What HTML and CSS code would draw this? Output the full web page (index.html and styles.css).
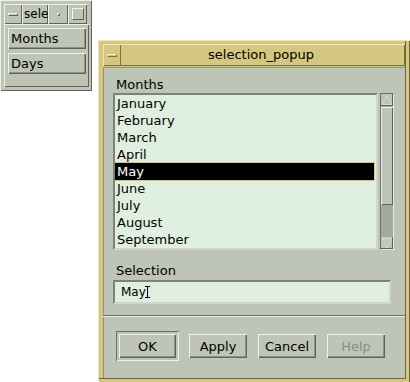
FILE: index.html
```html
<!DOCTYPE html>
<html lang="en">

<head>
    <meta charset="UTF-8">
    <title>selection_popup</title>
    <link rel="stylesheet" href="styles.css">
</head>

<body>
    <div class="desktop">
        <!-- main window, mostly covered -->
        <div class="small-win">
            <div class="titlebar small-title">
                <span class="tb-btn tb-menu"><i class="menu-bar"></i></span>
                <span class="tb-title">sele</span>
                <span class="tb-btn tb-min"><i class="min-dot"></i></span>
                <span class="tb-btn tb-max"><i class="max-box"></i></span>
            </div>
            <div class="small-body">
                <button class="push">Months</button>
                <button class="push">Days</button>
            </div>
        </div>

        <!-- popup dialog -->
        <div class="dialog">
            <div class="titlebar dlg-title">
                <span class="tb-btn tb-menu dlg-menu"><i class="menu-bar"></i></span>
                <span class="dlg-name">selection_popup</span>
            </div>
            <div class="client">
                <div class="label">Months</div>
                <div class="list-row">
                    <ul class="list">
                        <li>January</li>
                        <li>February</li>
                        <li>March</li>
                        <li>April</li>
                        <li class="selected">May</li>
                        <li>June</li>
                        <li>July</li>
                        <li>August</li>
                        <li>September</li>
                    </ul>
                    <div class="scrollbar">
                        <div class="arrow">
                            <svg width="12" height="12" viewBox="0 0 12 12"><path d="M6 1.5 L10.5 10.5 L1.5 10.5 Z" fill="none" stroke="#eef1e8" stroke-width="1" stroke-dasharray="1 1"/></svg>
                        </div>
                        <div class="trough">
                            <div class="thumb"></div>
                        </div>
                        <div class="arrow">
                            <svg width="12" height="12" viewBox="0 0 12 12"><path d="M6 10.5 L10.5 1.5 L1.5 1.5 Z" fill="none" stroke="#eef1e8" stroke-width="1" stroke-dasharray="1 1"/></svg>
                        </div>
                    </div>
                </div>
                <div class="label sel-label">Selection</div>
                <div class="field">May<span class="ibeam"></span></div>
                <div class="separator"></div>
                <div class="actions">
                    <div class="default-frame"><button class="push act">OK</button></div>
                    <button class="push act">Apply</button>
                    <button class="push act">Cancel</button>
                    <button class="push act disabled">Help</button>
                </div>
            </div>
        </div>
    </div>
</body>

</html>
```

FILE: styles.css
```css
body {
    margin: 0;
    background-color: #fff;
    font-family: "DejaVu Sans", "Liberation Sans", sans-serif;
    font-size: 13px;
    color: #000;
}

.desktop {
    position: relative;
    width: 410px;
    height: 382px;
    overflow: hidden;
}

/* window frames */
.small-win {
    position: absolute;
    left: 0;
    top: 0;
    width: 92px;
    height: 91px;
    box-sizing: border-box;
    padding: 4px 3px 4px 4px;
    background-color: #bec5b6;
    box-shadow: inset 1px 1px #eef1e8, inset -1px -1px #5e6456;
}

.titlebar {
    display: flex;
    align-items: stretch;
}

.small-title {
    height: 20px;
}

.tb-btn {
    display: flex;
    align-items: center;
    justify-content: center;
    box-sizing: border-box;
    box-shadow: inset 1px 1px #eef1e8, inset -1px -1px #5e6456;
}

.tb-menu {
    width: 18px;
}

.menu-bar {
    display: block;
    width: 10px;
    height: 3px;
    box-sizing: border-box;
    border-top: 1px solid #f2f4ee;
    border-left: 1px solid #f2f4ee;
    border-bottom: 1px solid #5e6456;
    border-right: 1px solid #5e6456;
}

.tb-title {
    width: 26px;
    overflow: hidden;
    white-space: nowrap;
    padding-left: 2px;
    box-sizing: border-box;
    line-height: 20px;
    font-size: 12px;
    box-shadow: inset 1px 1px #eef1e8, inset -1px -1px #5e6456;
}

.tb-min {
    width: 20px;
}

.min-dot {
    display: block;
    width: 3px;
    height: 3px;
    box-sizing: border-box;
    border-top: 1px solid #f2f4ee;
    border-left: 1px solid #f2f4ee;
    border-bottom: 1px solid #5e6456;
    border-right: 1px solid #5e6456;
}

.tb-max {
    width: 19px;
}

.max-box {
    display: block;
    width: 12px;
    height: 12px;
    box-sizing: border-box;
    border-top: 1px solid #f2f4ee;
    border-left: 1px solid #f2f4ee;
    border-bottom: 1px solid #5e6456;
    border-right: 1px solid #5e6456;
}

.small-body {
    display: flex;
    flex-direction: column;
    gap: 4px;
    padding: 4px 3px 0 4px;
    box-shadow: inset 1px 1px #eef1e8, inset -1px -1px #5e6456;
    height: 59px;
}

.push {
    font-family: inherit;
    font-size: 13px;
    color: #000;
    background-color: #bec5b6;
    border: none;
    margin: 0;
    padding: 0 0 0 3px;
    text-align: left;
    height: 22px;
    box-shadow: inset 1px 1px #eef1e8, inset -1px -1px #5e6456, inset -2px -2px #8c9284;
}

.small-body .push {
    width: 78px;
    height: 21px;
}

/* dialog */
.dialog {
    position: absolute;
    left: 98px;
    top: 40px;
    width: 312px;
    height: 343px;
    box-sizing: border-box;
    padding: 4px 5px 5px 5px;
    background-color: #d5c77f;
    box-shadow: inset 1px 1px #efe6b8, inset -1px -1px #6f6538, inset -4px -4px #d5c77f, inset -5px -5px #6f6538;
}

.dlg-title {
    height: 22px;
    box-shadow: inset 1px 1px #efe6b8, inset -1px -1px #7a6f3e;
}

.dlg-menu {
    width: 18px;
    box-shadow: inset 1px 1px #efe6b8, inset -1px -1px #7a6f3e;
}

.dlg-menu .menu-bar {
    border-color: #f4edc6 #7a6f3e #7a6f3e #f4edc6;
}

.dlg-name {
    flex: 1;
    text-align: center;
    line-height: 22px;
    padding-right: 4px;
}

.client {
    margin-top: 1px;
    background-color: #bec5b6;
    height: 311px;
    box-sizing: border-box;
    padding: 10px 10px 0 10px;
    box-shadow: inset 1px 1px #8c9284;
}

.label {
    height: 16px;
    line-height: 16px;
    padding-left: 3px;
}

.list-row {
    display: flex;
    gap: 2px;
    height: 157px;
}

.list {
    list-style: none;
    margin: 0;
    padding: 0;
    width: 265px;
    box-sizing: border-box;
    overflow: hidden;
    background-color: #e0f0e0;
    border-top: 2px solid #7c8274;
    border-left: 2px solid #7c8274;
    border-bottom: 2px solid #d0d6c8;
    border-right: 2px solid #d0d6c8;
}

.list li {
    height: 17px;
    line-height: 18px;
    padding-left: 2px;
}

.list li.selected {
    background-color: #000;
    color: #fff;
    box-shadow: 0 0 0 1px #d5c77f;
    margin-right: 2px;
}

.scrollbar {
    width: 14px;
    display: flex;
    flex-direction: column;
    box-sizing: border-box;
    background-color: #a3aa9b;
    border-left: 1px solid #6a7062;
    border-top: 1px solid #6a7062;
    border-right: 1px solid #e6eade;
    border-bottom: 1px solid #e6eade;
}

.arrow {
    height: 12px;
    display: flex;
    justify-content: center;
    background-color: #bec5b6;
    box-shadow: inset -1px -1px #5e6456;
}

.trough {
    flex: 1;
}

.thumb {
    height: 98px;
    margin-top: 1px;
    background-color: #bec5b6;
    box-shadow: inset 1px 1px #eef1e8, inset -1px -1px #5e6456;
}

.sel-label {
    margin-top: 13px;
    margin-bottom: 1px;
}

.field {
    width: 278px;
    height: 24px;
    box-sizing: border-box;
    padding-left: 6px;
    font-size: 12px;
    background-color: #e0f0e0;
    border-top: 2px solid #7c8274;
    border-left: 2px solid #7c8274;
    border-bottom: 2px solid #d0d6c8;
    border-right: 2px solid #d0d6c8;
    display: flex;
    align-items: center;
}

.ibeam {
    display: inline-block;
    width: 5px;
    height: 12px;
    box-sizing: border-box;
    border-top: 1px solid #000;
    border-bottom: 1px solid #000;
    background: linear-gradient(#000, #000) center / 1px 100% no-repeat;
    margin-left: -1px;
}

.separator {
    margin: 11px -10px 0 -10px;
    height: 2px;
    border-top: 1px solid #6a7062;
    border-bottom: 1px solid #eef1e8;
    box-sizing: border-box;
}

.actions {
    display: flex;
    align-items: center;
    gap: 11px;
    margin-top: 14px;
    padding-left: 3px;
}

.default-frame {
    width: 63px;
    height: 30px;
    box-sizing: border-box;
    padding: 3px;
    margin-right: -1px;
    box-shadow: inset 1px 1px #6a7062, inset -1px -1px #eef1e8;
}

.act {
    width: 58px;
    height: 24px;
    padding: 0;
    text-align: center;
}

.default-frame .act {
    width: 57px;
}

.act.disabled {
    color: #8a9082;
}
```
